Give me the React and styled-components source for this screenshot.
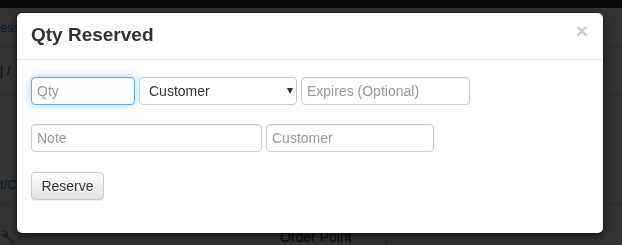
import styled, { createGlobalStyle } from "styled-components";

const GlobalStyle = createGlobalStyle`
  html, body {
    margin: 0;
    height: 100%;
    overflow: hidden;
    background: #fff;
    font-family: "Liberation Sans", Arial, sans-serif;
    font-size: 14px;
    color: #333;
  }
  * { box-sizing: border-box; }
`;

// page behind the modal
const Page = styled.div`
  display: flex;
  flex-direction: column;
  height: 245px;
`;

const Navbar = styled.div`
  height: 8px;
  background: #222;
`;

const Row = styled.div`
  display: flex;
  align-items: ${(p) => p.$align || "center"};
  height: ${(p) => p.$h}px;
  border-bottom: ${(p) => (p.$line ? "1px solid #ddd" : "none")};
  padding-bottom: ${(p) => p.$pb || 0}px;
`;

const Edge = styled.div`
  width: 17px;
  white-space: nowrap;
  font-size: 13px;
  color: ${(p) => p.$color || "#333"};
`;

const Label = styled.div`
  margin-left: ${(p) => p.$ml}px;
  width: ${(p) => p.$w}px;
  color: #333;
`;

const ValueBox = styled.div`
  height: 30px;
  align-self: flex-end;
  border-left: 1px solid #ccc;
  border-top: 1px solid #ccc;
  padding: 2px 4px;
  width: 200px;
  color: #555;
`;

const Backdrop = styled.div`
  position: fixed;
  inset: 0;
  background: rgba(0, 0, 0, 0.8);
  padding: 12px 18px 0 16px;
`;

const Dialog = styled.div`
  width: 588px;
  background: #fff;
  border-radius: 6px;
  border: 1px solid rgba(0, 0, 0, 0.2);
  box-shadow: 0 3px 9px rgba(0, 0, 0, 0.5);
  background-clip: padding-box;
`;

const Header = styled.div`
  display: flex;
  align-items: flex-start;
  justify-content: space-between;
  padding: 9px 15px 11px 14px;
  border-bottom: 1px solid #e5e5e5;
`;

const Title = styled.h4`
  margin: 0;
  font-size: 19px;
  font-weight: bold;
  line-height: 26px;
  color: #333;
`;

const Close = styled.button`
  border: 0;
  background: transparent;
  padding: 0;
  margin-top: -2px;
  font-family: "Liberation Sans", Arial, sans-serif;
  font-size: 21px;
  font-weight: bold;
  line-height: 1;
  color: #000;
  opacity: 0.2;
  text-shadow: 0 1px 0 #fff;
  cursor: pointer;
`;

const Body = styled.div`
  display: flex;
  flex-direction: column;
  gap: 19px;
  padding: 17px 14px 33px;
`;

const FieldRow = styled.div`
  display: flex;
  gap: 4px;
  margin-top: ${(p) => p.$mt || 0}px;
`;

const Input = styled.input`
  width: ${(p) => p.$w}px;
  height: 28px;
  padding: 0 5px;
  border: 1px solid ${(p) => (p.$focus ? "#66afe9" : "#ccc")};
  border-radius: 4px;
  font-family: inherit;
  font-size: 14px;
  color: #555;
  outline: none;
  box-shadow: ${(p) =>
    p.$focus
      ? "inset 0 1px 1px rgba(0,0,0,.075), 0 0 8px rgba(102,175,233,.6)"
      : "inset 0 1px 1px rgba(0,0,0,.075)"};
  &::placeholder {
    color: #999;
  }
`;

const SelectWrap = styled.div`
  position: relative;
  width: ${(p) => p.$w}px;
  height: 28px;
  &::after {
    content: "";
    position: absolute;
    right: 4px;
    top: 11px;
    border-left: 3px solid transparent;
    border-right: 3px solid transparent;
    border-top: 6px solid #333;
    pointer-events: none;
  }
`;

const Select = styled.select`
  appearance: none;
  width: 100%;
  height: 100%;
  padding: 0 9px;
  border: 1px solid #ccc;
  border-radius: 4px;
  background: #fff;
  font-family: inherit;
  font-size: 14px;
  color: #333;
  outline: none;
`;

const Button = styled.button`
  width: 73px;
  height: 28px;
  padding: 0;
  border: 1px solid #ccc;
  border-radius: 4px;
  background-image: linear-gradient(to bottom, #fff 0%, #e0e0e0 100%);
  box-shadow: inset 0 1px 0 rgba(255, 255, 255, 0.15), 0 1px 1px rgba(0, 0, 0, 0.075);
  font-family: inherit;
  font-size: 14px;
  color: #333;
  text-shadow: 0 1px 0 #fff;
  cursor: pointer;
`;

export default function App() {
  return (
    <>
      <GlobalStyle />
      <Page>
        <Navbar />
        <Row $h={39} $line>
          <Edge $color="#337ab7">ess</Edge>
        </Row>
        <Row $h={48} $line>
          <Edge>| /</Edge>
        </Row>
        <Row $h={110} $line $align="flex-end" $pb={12}>
          <Edge $color="#337ab7">t/C</Edge>
        </Row>
        <Row $h={40} $align="flex-end">
          <Edge>🔧</Edge>
          <Label $ml={263} $w={106}>Order Point</Label>
          <ValueBox>10</ValueBox>
        </Row>
      </Page>
      <Backdrop>
        <Dialog>
          <Header>
            <Title>Qty Reserved</Title>
            <Close aria-label="Close">×</Close>
          </Header>
          <Body>
            <FieldRow>
              <Input $w={104} $focus placeholder="Qty" />
              <SelectWrap $w={158}>
                <Select defaultValue="customer">
                  <option value="customer">Customer</option>
                </Select>
              </SelectWrap>
              <Input $w={169} placeholder="Expires (Optional)" />
            </FieldRow>
            <FieldRow>
              <Input $w={231} placeholder="Note" />
              <Input $w={168} placeholder="Customer" />
            </FieldRow>
            <FieldRow $mt={1}>
              <Button>Reserve</Button>
            </FieldRow>
          </Body>
        </Dialog>
      </Backdrop>
    </>
  );
}
